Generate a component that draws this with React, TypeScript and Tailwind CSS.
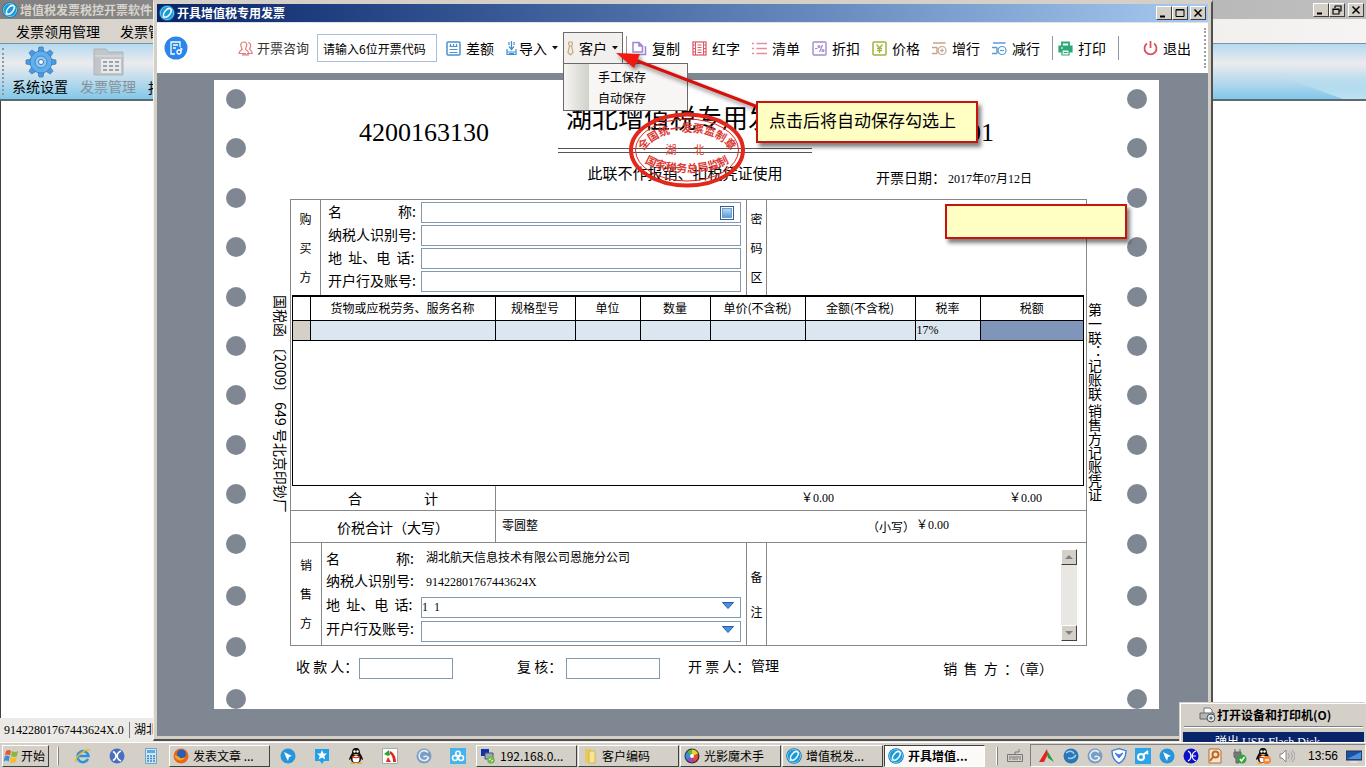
import type { ReactNode } from 'react';
import { clsx } from 'clsx';

const serif = "font-['Liberation_Serif','Noto_Sans_CJK_SC',serif]";

const BrandIcon = ({ size = 16 }: { size?: number }) => (
    <svg width={size} height={size} viewBox="0 0 16 16" className="shrink-0">
        <circle cx="8" cy="8" r="7.8" fill="#1478b8" />
        <circle cx="8" cy="8" r="6.6" fill="#1c9ad8" stroke="#7fd4f5" strokeWidth="0.8" />
        <ellipse cx="8.2" cy="7.6" rx="2.8" ry="5" transform="rotate(38 8 8)" fill="none" stroke="#fff" strokeWidth="1.4" />
        <path d="M3 12c4 2 8-1 9-6" fill="none" stroke="#d8f3ff" strokeWidth="1" />
    </svg>
);

const Icon = ({ color, children, w = 15 }: { color: string; children: ReactNode; w?: number }) => (
    <svg width={w} height="15" viewBox={`0 0 ${w} 15`} fill="none" stroke={color} strokeWidth="1.2" className="shrink-0">
        {children}
    </svg>
);

const icons = {
    consult: (
        <Icon color="#dd7c78">
            <path d="M6 1c-3 0-3.600 2-3 4 .3 1.500 1 2.500 1 3.500C3 9.500 1 10 1 12.500h7M6 1c2 0 3 1.500 2.700 3.500C8.400 6.500 7.500 7 7.600 8.500M10 1.500c2 .3 3 2 2.500 4-.4 1.500-1 2.300-.8 3 1 1 2.500 1.500 2.500 4H9M4 13.800h7M7.600 8.500c1.500 1 2.600 1.500 3 3.500" />
        </Icon>
    ),
    diff: (
        <Icon color="#4a90d0">
            <rect x="1" y="1" width="13" height="13" rx="1" strokeWidth="1.500" />
            <path d="M4.500 3v3M7.500 3v3M10.500 3v3M3.500 5.500h8M3.500 8.500h8M3.500 11.500h8" />
        </Icon>
    ),
    importIcon: (
        <Icon color="#3f8fd0" w={11}>
            <path d="M5.500 0v8M3 5.500l2.500 3 2.500-3M3 1v3M8 1v3M1 8v5.500h9V8M1 11h9M3 12.500h5" />
        </Icon>
    ),
    customer: (
        <Icon color="#c9a878" w={7}>
            <path d="M2 1h3l.5 2-1 2h-2l-1-2zM2.500 5L1 11.500l2.500 2.500L6 11.500 4.500 5" />
        </Icon>
    ),
    copy: (
        <Icon color="#a184cc">
            <path d="M1 1.500h6l3.500 3.500V11H1zM7 1.500V5h3.500" strokeWidth="1.500" />
            <path d="M12.500 6h1v7.500H4" strokeWidth="1.500" />
        </Icon>
    ),
    red: (
        <Icon color="#dc5560">
            <rect x="1" y="1" width="13" height="13" strokeWidth="1.200" />
            <path d="M3.500 1v13M11.500 1v13M5.500 4h4M5.500 6.500h4M5.500 9h4M5.500 11.500h4M1 4h2M1 7.500h2M1 11h2M12 4h2M12 7.500h2M12 11h2" strokeWidth="1" />
        </Icon>
    ),
    list: (
        <Icon color="#e58ba2">
            <path d="M4.500 2.500H15M4.500 7.500H15M4.500 12.500H15M0 2.500h2M0 7.500h2M0 12.500h2" strokeWidth="1.400" />
        </Icon>
    ),
    discount: (
        <Icon color="#a68aca">
            <rect x="1" y="1" width="13" height="13" rx="1" strokeWidth="1.400" />
            <path d="M3 7.500h2.500M10.500 4l-3 7" />
            <circle cx="7" cy="5.500" r="1" />
            <circle cx="11" cy="9.500" r="1" />
        </Icon>
    ),
    price: (
        <Icon color="#9db53a">
            <rect x="1" y="1" width="13" height="13" rx="1" strokeWidth="1.500" />
            <path d="M4.500 3.500l3 3.500 3-3.500M7.500 7v5M5 7.500h5M5 9.700h5" strokeWidth="1.300" />
        </Icon>
    ),
    addRow: (
        <Icon color="#c9a28c">
            <path d="M1 2h12.500M0 6.500h5M0 12.500h5M5 6.500v6" strokeWidth="1.400" />
            <circle cx="10" cy="9.500" r="4" />
            <path d="M8 9.500h4M10 7.500v4" />
        </Icon>
    ),
    delRow: (
        <Icon color="#5b9bd5">
            <path d="M1 2h12.500M0 6.500h5M0 12.500h5M5 6.500v6" strokeWidth="1.400" />
            <circle cx="10" cy="9.500" r="4" />
            <path d="M8 9.500h4" />
        </Icon>
    ),
    print: (
        <Icon color="#2aa876">
            <path d="M4 5V1.500h7V5" strokeWidth="1.800" />
            <path d="M1 5h13v6H1z" fill="#2aa876" />
            <path d="M4 9h7v5H4z" fill="#fff" />
            <path d="M3 7h2" stroke="#fff" />
            <path d="M5.500 11.500h4" />
        </Icon>
    ),
    exit: (
        <Icon color="#d4545e">
            <path d="M4 2.500a6 6 0 1 0 7 0M7.500 0v7" strokeWidth="1.800" />
        </Icon>
    ),
};

const Caret = () => (
    <svg width="6" height="4" viewBox="0 0 6 4" className="shrink-0">
        <path d="M0 0h6L3 3.500z" fill="#111" />
    </svg>
);

const ToolButton = ({ icon, label }: { icon: ReactNode; label: string }) => (
    <button className="flex items-center gap-[5px] text-sm whitespace-nowrap">
        {icon}
        {label}
    </button>
);

const ToolDivider = () => <div className="h-6 w-px shrink-0 bg-[#9a90a8]" />;

const CaptionButton = ({ label, children }: { label: string; children: ReactNode }) => (
    <button
        aria-label={label}
        className="flex h-[14px] w-4 items-center justify-center border border-t-white border-l-white border-r-[#404040] border-b-[#404040] bg-[#d4d0c8]"
    >
        <svg width="10" height="10" viewBox="0 0 10 10" fill="none" stroke="#000" strokeWidth="1.500">
            {children}
        </svg>
    </button>
);

const minimize = <path d="M1 8.500h5" strokeWidth="2" />;
const maximize = <path d="M1 1.500h8v7H1zM1 2h8" strokeWidth="1" />;
const restore = <path d="M3 1h6v5H7M3 1v2M1 4h6v5H1zM1 4.500h6" strokeWidth="1.200" />;
const close = <path d="M1.500 1.500l7 7M8.500 1.500l-7 7" />;

function MainWindow() {
    return (
        <div className="flex h-full flex-col bg-[#d4d0c8]">
            <div className="flex h-[19px] items-center gap-[2px] bg-gradient-to-r from-[#808080] to-[#c0c0c0] pl-[2px] text-[#d8d4cc]">
                <BrandIcon />
                <span className="flex-1 text-xs font-bold">增值税发票税控开票软件</span>
                <div className="flex pr-[2px]">
                    <CaptionButton label="最小化">{minimize}</CaptionButton>
                    <CaptionButton label="还原">{restore}</CaptionButton>
                    <div className="w-[3px]" />
                    <CaptionButton label="关闭">{close}</CaptionButton>
                </div>
            </div>
            <nav className="flex h-6 items-center gap-5 bg-gradient-to-r from-[#d6d2ca] to-[#f5f4f2] pl-4 text-sm">
                <button>发票领用管理</button>
                <button>发票管理</button>
            </nav>
            <div className="relative flex h-[58px] items-stretch border-t border-b-2 border-t-[#7a94a4] border-b-[#606870] bg-gradient-to-b from-[#b3daf0] via-[#ecebed] via-35% to-[#80c8ea]">
                <div className="absolute inset-y-0 right-0 w-[153px] bg-gradient-to-b from-transparent via-transparent to-[#c0e2f2] [clip-path:polygon(35%_50%,100%_50%,100%_100%,85%_100%)]" />
                <div className="my-1 ml-[2px] border-l-2 border-dotted border-[#8a98a4]" />
                <button className="ml-2 flex flex-col items-center text-sm leading-4">
                    <svg width="32" height="32" viewBox="0 0 32 32" className="mt-[2px] ml-[2px]">
                        <g fill="#4c9be0" stroke="#2f78bd" strokeWidth="0.7">
                            {[0, 45, 90, 135, 180, 225, 270, 315].map((a) => (
                                <path key={a} d="M13 6l1-5h4l1 5z" transform={`rotate(${a} 16 16)`} />
                            ))}
                            <circle cx="16" cy="16" r="11" fill="#62aeea" />
                        </g>
                        <circle cx="16" cy="16" r="6" fill="#8fc6f2" stroke="#3d88cb" />
                        <circle cx="16" cy="16" r="2.500" fill="#fff" stroke="#2f78bd" />
                    </svg>
                    系统设置
                </button>
                <button className="ml-3 flex flex-col items-center text-sm leading-4 text-[#84919a]">
                    <svg width="32" height="32" viewBox="0 0 32 32" className="mt-[2px] ml-[2px]">
                        <path d="M1 3h12l2 3h15v23H1z" fill="#c3c6c9" stroke="#adb2b6" />
                        <path d="M2 10h28" stroke="#e0e2e4" />
                        <path d="M8 13h20v14H8z" fill="#e9eaeb" />
                        <path d="M10 16h4M16 16h4M22 16h4M10 20h4M16 20h4M22 20h4M10 24h4M16 24h4M22 24h4" stroke="#9ea4a8" strokeWidth="2" />
                    </svg>
                    发票管理
                </button>
                <span className="ml-3 self-end pb-1 text-sm leading-4">报税处理</span>
            </div>
            <div className="flex-1 border-l border-[#404040] bg-white" />
            <div className={clsx('flex h-6 items-center bg-[#eceae6] pl-1 text-xs', serif)}>
                <span className="w-[126px] border-r border-[#808080]">91422801767443624X.0</span>
                <span className="pl-1">湖北航天信息</span>
            </div>
        </div>
    );
}

const CustomerMenu = () => (
    <div className="relative z-20 flex h-8 w-[60px] shrink-0 items-center border border-[#6a6a6a] border-b-[#f1f0ee] bg-[#f1f0ee] px-[3px]">
        <button className="flex items-center gap-[5px] text-sm whitespace-nowrap">
            {icons.customer}
            客户
            <Caret />
        </button>
        <ul className="absolute top-[30px] -left-px flex w-[125px] flex-col border border-[#6a6a6a] bg-gradient-to-r from-[#f6f5f3] from-0% via-[#d2d2cb] via-20% to-[#f7f6f5] to-20% py-[2px] text-xs">
            <li><button className="h-[22px] pl-[34px]">手工保存</button></li>
            <li><button className="h-5 pl-[34px]">自动保存</button></li>
        </ul>
    </div>
);

function Toolbar() {
    return (
        <div className="flex h-[50px] items-center bg-white">
            <svg width="24" height="24" viewBox="0 0 24 24" className="ml-[7px] shrink-0">
                <circle cx="12" cy="12" r="11.500" fill="#2a86ea" />
                <path d="M11 18H7V6h9v5M9 9h5M9 12h3" fill="none" stroke="#fff" strokeWidth="1.300" />
                <circle cx="15" cy="16" r="2" fill="none" stroke="#fff" strokeWidth="1.300" />
                <path d="M17 16v-3.500l1.500 1" fill="none" stroke="#fff" strokeWidth="1.300" />
            </svg>
            <button className="ml-[50px] flex items-center gap-1 text-[13px] whitespace-nowrap text-[#333]">
                {icons.consult}
                开票咨询
            </button>
            <input
                aria-label="开票代码"
                defaultValue="请输入6位开票代码"
                className="ml-2 h-7 w-[120px] shrink-0 border border-[#a9bedd] px-[5px] text-xs"
            />
            <div className="ml-[9px] flex shrink-0 items-center">
                <ToolButton icon={icons.diff} label="差额" />
                <div className="ml-3 flex items-center gap-[5px]">
                    <button className="flex items-center gap-[2px] text-sm">
                        {icons.importIcon}
                        导入
                    </button>
                    <Caret />
                </div>
            </div>
            <div className="w-[5px] shrink-0" />
            <CustomerMenu />
            <div className="w-[3px] shrink-0" />
            <ToolDivider />
            <div className="ml-[5px] flex shrink-0 gap-3">
                <ToolButton icon={icons.copy} label="复制" />
                <ToolButton icon={icons.red} label="红字" />
                <ToolButton icon={icons.list} label="清单" />
                <ToolButton icon={icons.discount} label="折扣" />
                <ToolButton icon={icons.price} label="价格" />
                <ToolButton icon={icons.addRow} label="增行" />
                <ToolButton icon={icons.delRow} label="减行" />
            </div>
            <div className="ml-3 flex shrink-0 items-center gap-[5px]">
                <ToolDivider />
                <ToolButton icon={icons.print} label="打印" />
            </div>
            <div className="ml-3 flex shrink-0 items-center gap-6">
                <ToolDivider />
                <ToolButton icon={icons.exit} label="退出" />
            </div>
            <div className="mr-[2px] ml-auto h-10 border-l-2 border-dotted border-[#a0a0a0]" />
        </div>
    );
}

const Holes = () => (
    <div className="flex w-11 shrink-0 flex-col items-center gap-8 pt-[9px]">
        {[10, 3].map((n) => (
            <div key={n} className={clsx('flex flex-col justify-between', n === 10 ? 'h-[467px]' : 'h-[124px]')}>
                {Array.from({ length: n }, (_, i) => (
                    <div key={i} className="size-5 rounded-full bg-[#7f8892]" />
                ))}
            </div>
        ))}
    </div>
);

const Stamp = () => (
    <svg width="118" height="76" viewBox="0 0 118 76" className="absolute top-8 left-1/2 z-10 -ml-[61px]">
        <defs>
            <path id="arcTop" d="M15 41A45 27 0 0 1 103 41" />
            <path id="arcBottom" d="M14 48A50 22 0 0 0 104 48" />
        </defs>
        <g fill="none" stroke="#e2281c">
            <ellipse cx="59" cy="38" rx="56" ry="35.500" strokeWidth="4" />
            <ellipse cx="59" cy="38" rx="51.500" ry="31" strokeWidth="1" />
        </g>
        <g fill="#dc3a34" fontSize="11" textAnchor="middle">
            <text fontWeight="bold"><textPath href="#arcTop" startOffset="50%">全国统一发票监制章</textPath></text>
            <text x="43" y="42">湖</text>
            <text x="71" y="42">北</text>
            <text fontWeight="bold"><textPath href="#arcBottom" startOffset="50%">国家税务总局监制</textPath></text>
        </g>
    </svg>
);

const InvoiceHeader = () => (
    <div className="relative flex h-[119px] justify-between">
        <div className={clsx('w-[268px] pt-[33px] pl-[69px] text-[26px]', serif)}>4200163130</div>
        <div className="flex w-[254px] flex-col items-center">
            <h1 className="mt-[18px] self-start pl-2 text-[26px] leading-[38px] whitespace-nowrap">湖北增值税专用发票</h1>
            <div className="mt-3 h-[5px] w-full border-y border-[#555]" />
            <p className="mt-[10px] text-[15px] leading-5 whitespace-nowrap">此联不作报销、扣税凭证使用</p>
        </div>
        <Stamp />
        <div className="flex w-[275px] flex-col">
            <div className={clsx('pt-[33px] pr-[93px] text-right text-[26px]', serif)}>01</div>
            <p className="mt-[15px] flex items-center pl-[64px] text-sm leading-5 whitespace-nowrap">
                <span className="w-[72px]">开票日期：</span>
                <span className={clsx('pt-1 text-xs', serif)}>2017年07月12日</span>
            </p>
        </div>
    </div>
);

const SideTitle = ({ chars }: { chars: string }) => (
    <div className="flex flex-col items-center justify-around py-1 text-xs">
        {chars.split('').map((c) => <span key={c}>{c}</span>)}
    </div>
);

const fieldLabels = ['名　　　　称:', '纳税人识别号:', '地  址、电  话:', '开户行及账号:'];

const BuyerSection = () => (
    <div className="flex h-24 border-x border-t border-[#888]">
        <div className="grid w-[30px] border-r border-[#888]"><SideTitle chars="购买方" /></div>
        <div className="flex w-[426px] flex-col gap-[2px] border-r border-[#888] pt-[2px] pr-[5px] pl-[7px]">
            {fieldLabels.map((label, i) => (
                <div key={label} className="flex h-[21px] items-center">
                    <label htmlFor={`buyer${i}`} className="w-[93px] pb-1 text-sm whitespace-pre">{label}</label>
                    <div className="flex h-full flex-1 items-center border border-[#8299b0] bg-white pr-[6px]">
                        <input id={`buyer${i}`} className="h-full min-w-0 flex-1 px-px text-xs outline-none" />
                        {i === 0 && (
                            <button aria-label="选择购买方" className="h-[14px] w-[14px] border border-[#2d6098] p-px">
                                <div className="h-full border border-[#6aa0d0] bg-gradient-to-b from-[#b8d8f2] to-[#5f9fd6]" />
                            </button>
                        )}
                    </div>
                </div>
            ))}
        </div>
        <div className="grid w-5 border-r border-[#888]"><SideTitle chars="密码区" /></div>
    </div>
);

const columns = [
    { name: '', width: 'w-[17px]' },
    { name: '货物或应税劳务、服务名称', width: 'w-[185px]' },
    { name: '规格型号', width: 'w-20' },
    { name: '单位', width: 'w-[65px]' },
    { name: '数量', width: 'w-[70px]' },
    { name: '单价(不含税)', width: 'w-[95px]' },
    { name: '金额(不含税)', width: 'w-[110px]' },
    { name: '税率', width: 'w-[65px]' },
    { name: '税额', width: '' },
];

const ItemsTable = () => (
    <div className="h-[191px] border-x border-[#888] pr-[2px] pl-px">
        <div className="h-full border border-t-2 border-black">
            <table className="w-full table-fixed border-collapse text-xs">
                <thead>
                    <tr className="h-[23px]">
                        {columns.map((col) => (
                            <th key={col.name} className={clsx('border-r border-b border-black p-0 font-normal whitespace-nowrap last:border-r-0', col.width)}>
                                {col.name}
                            </th>
                        ))}
                    </tr>
                </thead>
                <tbody>
                    <tr className="h-5">
                        {columns.map((col, i) => (
                            <td
                                key={col.name}
                                className={clsx(
                                    'border-r border-b border-black p-0 pl-px leading-[18px] last:border-r-0',
                                    i === 0 ? 'bg-[#d4d0c8]' : i === 8 ? 'bg-[#7f96ba]' : 'bg-[#dce6f0]',
                                    serif,
                                )}
                            >
                                {col.name === '税率' && '17%'}
                            </td>
                        ))}
                    </tr>
                </tbody>
            </table>
        </div>
    </div>
);

const Totals = () => (
    <div className="border-x border-[#888] text-sm">
        <div className="flex h-[25px] border-b border-[#888]">
            <div className="flex w-[205px] items-center justify-center gap-[62px] border-r border-[#888]">
                <span>合</span>
                <span>计</span>
            </div>
            <div className={clsx('flex flex-1 items-center justify-between pr-11 pl-[305px] text-xs', serif)}>
                <span>￥0.00</span>
                <span>￥0.00</span>
            </div>
        </div>
        <div className="flex h-8 items-center border-b border-[#888]">
            <div className="flex h-full w-[205px] items-center justify-center border-r border-[#888]">价税合计（大写）</div>
            <div className="w-[371px] pb-1 pl-[6px] text-xs">零圆整</div>
            <span className="text-xs">（小写）</span>
            <span className={clsx('pb-1 pl-px text-xs', serif)}>￥0.00</span>
        </div>
    </div>
);

const ScrollButton = ({ label, d }: { label: string; d: string }) => (
    <button aria-label={label} className="flex size-4 items-center justify-center border border-t-white border-l-white border-r-[#404040] border-b-[#404040] bg-[#d4d0c8]">
        <svg width="8" height="4" viewBox="0 0 8 4"><path d={d} fill="#808080" /></svg>
    </button>
);

const ComboField = ({ id, value }: { id: string; value: string }) => (
    <div className="relative h-[21px] flex-1">
        <select id={id} defaultValue={value} className={clsx('h-full w-full appearance-none border border-[#8299b0] bg-white text-xs', serif)}>
            <option value={value}>{value}</option>
        </select>
        <svg width="12" height="7" viewBox="0 0 12 7" className="pointer-events-none absolute top-[7px] right-[7px]">
            <path d="M0.500 0.500h11L6 6.500z" fill="#4b92e4" stroke="#2a5aa8" />
        </svg>
    </div>
);

const SellerSection = () => (
    <div className="flex h-[103px] border-x border-b border-[#888]">
        <div className="grid w-[31px] border-r border-[#888] py-1"><SideTitle chars="销售方" /></div>
        <div className="flex w-[425px] flex-col gap-[3px] border-r border-[#888] pt-1 pr-[5px] pl-1 text-sm">
            <div className="flex h-[21px] items-center">
                <span className="w-[100px] whitespace-pre">{fieldLabels[0]}</span>
                <span className="pb-[2px] text-xs">湖北航天信息技术有限公司恩施分公司</span>
            </div>
            <div className="flex h-[21px] items-center">
                <span className="w-[100px] pb-1">{fieldLabels[1]}</span>
                <span className={clsx('text-xs', serif)}>91422801767443624X</span>
            </div>
            <div className="flex h-[21px] items-center">
                <label htmlFor="sellerAddress" className="w-[95px] pb-1 whitespace-pre">{fieldLabels[2]}</label>
                <ComboField id="sellerAddress" value={'1\u00a0\u00a01'} />
            </div>
            <div className="flex h-[21px] items-center">
                <label htmlFor="sellerBank" className="w-[95px] pb-1">{fieldLabels[3]}</label>
                <ComboField id="sellerBank" value="" />
            </div>
        </div>
        <div className="grid w-5 border-r border-[#888] py-3"><SideTitle chars="备注" /></div>
        <div className="flex flex-1 pt-[6px] pr-[9px] pb-1">
            <textarea aria-label="备注" className="flex-1 resize-none outline-none" />
            <div className="flex w-4 flex-col justify-between bg-[#e9e7e3]">
                <ScrollButton label="上" d="M0 4h8L4 0z" />
                <ScrollButton label="下" d="M0 0h8L4 4z" />
            </div>
        </div>
    </div>
);

const InvoiceFooter = () => (
    <div className="flex h-11 items-center text-sm whitespace-pre pl-[6px]">
        <label htmlFor="payee" className="w-[63px] pb-1">收 款 人：</label>
        <input id="payee" className="h-[21px] w-[94px] border border-[#8299b0]" />
        <label htmlFor="checker" className="ml-16 w-[49px] pb-1">复 核：</label>
        <input id="checker" className="h-[21px] w-[94px] border border-[#8299b0]" />
        <span className="ml-7 w-[63px] pb-1">开 票 人：</span>
        <span className="pb-[6px]">管理</span>
        <span className="mr-[34px] ml-auto">销  售  方  ：（章）</span>
    </div>
);

function InvoiceWindow() {
    return (
        <section className="absolute top-0 right-[153px] bottom-px left-[153px] flex flex-col border-t-[3px] border-r-2 border-b-2 border-l border-t-[#d4d0c8] border-r-[#505050] border-b-[#505050] border-l-[#f4f2ee] bg-[#d4d0c8] px-[3px] pt-px pb-[3px]">
            <div className="flex h-[19px] shrink-0 items-center gap-[2px] border-b border-[#e4e2de] bg-gradient-to-r from-[#0a246a] to-[#a6caf0] pr-[2px] pl-[2px] text-white">
                <BrandIcon />
                <span className="flex-1 text-xs font-bold">开具增值税专用发票</span>
                <CaptionButton label="最小化">{minimize}</CaptionButton>
                <div className="-ml-[2px]">
                    <CaptionButton label="最大化">{maximize}</CaptionButton>
                </div>
                <CaptionButton label="关闭">{close}</CaptionButton>
            </div>
            <Toolbar />
            <div className="min-h-0 flex-1 bg-[#7f8892] pt-[7px] pr-[49px] pl-[57px]">
                <div className="flex h-[629px] overflow-hidden bg-white">
                    <Holes />
                    <div className="w-[31px] shrink-0 pt-[215px] pl-[13px] text-sm leading-4 whitespace-nowrap [writing-mode:vertical-rl] [text-orientation:sideways]">
                        国税函 〔2009〕 649 号北京印钞厂
                    </div>
                    <div className="ml-px min-w-0 flex-1">
                        <InvoiceHeader />
                        <BuyerSection />
                        <ItemsTable />
                        <Totals />
                        <SellerSection />
                        <InvoiceFooter />
                    </div>
                    <div className="w-[28px] shrink-0 pt-[223px] pr-[12px] text-sm leading-4 whitespace-nowrap [writing-mode:vertical-rl]">
                        第一联：记账联 销售方记账凭证
                    </div>
                    <Holes />
                </div>
            </div>
        </section>
    );
}

const Annotations = () => (
    <>
        <svg width="160" height="80" viewBox="0 0 160 80" className="pointer-events-none absolute top-[40px] left-[605px] z-30 drop-shadow-[2px_3px_2px_rgba(0,0,0,0.45)]">
            <path d="M153 67L30 20" stroke="#d8100c" strokeWidth="3" />
            <path d="M11 13l24 1-6 14z" fill="#f01810" />
        </svg>
        <div className="absolute top-[101px] left-[756px] z-30 border-2 border-[#c8140e] bg-[#ffffc4] px-[11px] pt-1 pb-2 text-[17px] leading-[26px] whitespace-nowrap shadow-[3px_4px_4px_rgba(0,0,0,0.5)]">
            <span className="mr-[9px]">点击后将自动保存勾选上</span>
        </div>
        <div className="absolute top-[204px] left-[945px] z-30 h-[35px] w-[182px] border-2 border-[#c8140e] bg-[#ffffc4] shadow-[3px_4px_4px_rgba(0,0,0,0.5)]" />
    </>
);

const DevicePopup = () => (
    <div className="absolute right-0 bottom-0 z-30 flex h-[39px] w-[186px] flex-col overflow-hidden border-t border-l border-white bg-[#d4d0c8] px-[2px] text-xs shadow-[-1px_-1px_0_#d4d0c8]">
        <button className="flex h-[22px] shrink-0 items-center pb-px pl-4 font-bold">
            <svg width="18" height="16" viewBox="0 0 18 16">
                <path d="M5 6V1h6l2 2v3" fill="#fff" stroke="#777" />
                <path d="M1 6h14v6H1z" fill="#b6b6b6" stroke="#666" />
                <circle cx="12" cy="11" r="4" fill="#dde4ea" stroke="#555" />
                <circle cx="12" cy="11" r="1.500" fill="#4b6e8e" />
            </svg>
            打开设备和打印机(O)
        </button>
        <div className="mx-px mb-1 h-[2px] shrink-0 border-t border-[#808080] bg-white" />
        <button className={clsx('h-5 shrink-0 bg-[#0a246a] pl-8 text-left text-white', serif)}>弹出 USB Flash Disk</button>
    </div>
);

const Disc = ({ fill, children }: { fill: string; children?: ReactNode }) => (
    <svg width="16" height="16" viewBox="0 0 16 16" className="shrink-0">
        <circle cx="8" cy="8" r="7.500" fill={fill} />
        {children}
    </svg>
);

const Square = ({ children }: { children: ReactNode }) => (
    <svg width="16" height="16" viewBox="0 0 16 16" className="shrink-0">{children}</svg>
);

const wing = <path d="M4 4l8 4-3 1-1 4-2-4z" fill="#fff" />;
const swirl = <path d="M12 4.500a5 5 0 1 0 .5 5.500C11 8 9 8 7.500 9" fill="none" stroke="#e4eef8" strokeWidth="1.600" />;

const Penguin = ({ busy }: { busy?: boolean }) => (
    <Square>
        <path d="M8 0c-3 0-4 2-4 5-1 2-3 4-3 7 1 0 1-1 2-1 0 2 1 4 5 4s5-2 5-4c1 0 1 1 2 1 0-3-2-5-3-7 0-3-1-5-4-5z" fill="#111" />
        <ellipse cx="8" cy="11" rx="3.500" ry="3.500" fill="#fff" />
        <circle cx="6.500" cy="3.500" r="1.200" fill="#fff" />
        <circle cx="9.500" cy="3.500" r="1.200" fill="#fff" />
        <path d="M5 6h6l-3 1.500zM2 14.500h5v1.500H3zM9 14.500h5l-1 1.500H9z" fill="#f5a31c" />
        <path d="M4 8c3 1.500 5 1.500 8 0v1.500c-3 1-5 1-8 0z" fill="#e02020" />
        {busy && <circle cx="12" cy="12" r="4" fill="#f5893a" />}
        {busy && <path d="M10 12h4" stroke="#fff" strokeWidth="1.500" />}
    </Square>
);

const IE = () => (
    <Square>
        <path d="M13 11a5.500 5.500 0 1 1 .5-3H4" fill="none" stroke="#2b93dc" strokeWidth="2.500" />
        <path d="M1 14C-1 10 10 0 15 2" fill="none" stroke="#edb62c" strokeWidth="1.500" />
    </Square>
);

const Calculator = () => (
    <Square>
        <path d="M2.500.5h11v15h-11z" fill="#cfe6f6" stroke="#6fa5cc" />
        <path d="M4 2h8v3H4z" fill="#5ba9dd" />
        <path d="M4 8h8M4 10.500h8M4 13h8" stroke="#3b86bf" strokeDasharray="2 1" strokeWidth="1.500" />
    </Square>
);

const TaskButton = ({ icon, label, active }: { icon: ReactNode; label: string; active?: boolean }) => (
    <button
        className={clsx(
            'flex h-[22px] w-[101px] shrink-0 items-center gap-1 overflow-hidden border px-[3px] text-xs whitespace-nowrap',
            active
                ? 'border-t-[#404040] border-l-[#404040] border-r-white border-b-white bg-[#fbfaf8] font-bold'
                : 'border-t-white border-l-white border-r-[#404040] border-b-[#404040] bg-[#d4d0c8]',
        )}
    >
        {icon}
        {label}
    </button>
);

function Taskbar() {
    return (
        <footer className="flex h-[26px] shrink-0 items-center border-t border-white bg-[#d4d0c8] pl-[2px]">
            <button className="flex h-[22px] w-[47px] items-center gap-px border border-t-white border-l-white border-r-[#404040] border-b-[#404040] text-xs whitespace-nowrap">
                <svg width="17" height="16" viewBox="0 0 17 16" className="shrink-0">
                    <path d="M3 3c2-1.500 3-1.500 5 0L7 7.500c-2-1.300-3-1.300-5 0z" fill="#e8542c" />
                    <path d="M9 3c2 1.300 4 1.300 6 0l-1 5c-2 1.200-4 1.200-6 0z" fill="#86b93c" />
                    <path d="M1.700 8.500c2-1.300 3-1.300 5 0l-1 5c-2-1.300-3-1.300-5 0z" fill="#3c8cd8" />
                    <path d="M7.700 9c2 1.200 4 1.200 6 0l-1 5c-2 1.200-4 1.200-6 0z" fill="#f4bd2c" />
                </svg>
                开始
            </button>
            <div className="ml-2 h-[18px] w-[2px] border-r border-[#808080] bg-white" />
            <div className="ml-4 flex gap-[18px]">
                <IE />
                <Disc fill="#4a6fc0"><path d="M4 3.500c4 2 4 7 0 9M12 3c-5 2-5 8 0 10" fill="none" stroke="#fff" strokeWidth="1.500" /></Disc>
                <Calculator />
            </div>
            <div className="ml-[10px]">
                <TaskButton
                    icon={<Disc fill="#e8661c"><circle cx="8.500" cy="6" r="4.500" fill="#2a5fb4" /><path d="M1 6c2 3 3 1 5 3s4 1 6 0c-2 5-9 5-11-3z" fill="#f7a81e" /></Disc>}
                    label="发表文章 ..."
                />
            </div>
            <div className="ml-[10px] flex gap-[18px]">
                <Disc fill="#2596dc">{wing}</Disc>
                <Square>
                    <path d="M1 1h14v12h-5l-2 3-2-3H1z" fill="#1fa0ea" />
                    <path d="M8 2l1.500 3.500H13L10.300 8l1 3.500L8 9.500l-3.300 2 1-3.500L3 5.500h3.500z" fill="#fff" />
                </Square>
                <Penguin />
                <Square>
                    <path d="M.5.5h15v15H.5z" fill="#fff" stroke="#aaa" />
                    <path d="M2 6l5-4 1 5-2 1z" fill="#2aa336" />
                    <path d="M8 3c4 2 6 6 6 11h-3C11 10 10 7 8 6z" fill="#e02c20" />
                    <path d="M6 9l3 5H4z" fill="#e02c20" />
                </Square>
                <Disc fill="#7c9cc4">{swirl}</Disc>
                <Square>
                    <path d="M0 0h16v16H0z" fill="#45b4ec" />
                    <g fill="none" stroke="#fff" strokeWidth="1.500"><circle cx="5" cy="10" r="2.500" /><circle cx="11" cy="10" r="2.500" /><circle cx="8" cy="5.500" r="2.200" /></g>
                </Square>
            </div>
            <div className="ml-[10px] flex gap-[1px]">
                <TaskButton icon={<Square><path d="M1 1h8v7H1z" fill="#1030b0" /><path d="M5 5h8v6H5z" fill="#9ab" stroke="#456" /><circle cx="11" cy="12" r="3.800" fill="#74b84a" /><path d="M9 12l2-1.500M11 13.500l2-1.500" stroke="#fff" /></Square>} label="192.168.0..." />
                <TaskButton icon={<Square><path d="M3 1h6v14H3z" fill="#e7c95c" /><path d="M7 3h6v12H7z" fill="#f7e596" stroke="#d6b848" /></Square>} label="客户编码" />
                <TaskButton
                    icon={<Disc fill="#333"><path d="M8 8L8 1.500A6.500 6.500 0 0 1 14 6z" fill="#ecd22e" /><path d="M8 8l6-2a6.500 6.500 0 0 1-4 8z" fill="#e8493a" /><path d="M8 8l2 6a6.500 6.500 0 0 1-7-2z" fill="#a048c0" /><path d="M8 8l-5 4a6.500 6.500 0 0 1 0-8z" fill="#3a8de0" /><path d="M8 8L3 4a6.500 6.500 0 0 1 5-2.500z" fill="#57bb41" /><circle cx="8" cy="8" r="2" fill="#fff" /></Disc>}
                    label="光影魔术手"
                />
                <TaskButton icon={<BrandIcon />} label="增值税发..." />
                <TaskButton icon={<BrandIcon />} label="开具增值..." active />
            </div>
            <div className="ml-[11px] h-[18px] w-[2px] border-r border-[#808080] bg-white" />
            <svg width="16" height="16" viewBox="0 0 16 16" className="ml-[9px] shrink-0" fill="none" stroke="#777">
                <path d="M.5 6.500h15v7H.5zM8 6V4h4V1M2 9h12M2 11h2M5 11h6M12 11h2" />
            </svg>
            <div className="ml-auto flex h-[23px] shrink-0 items-center gap-2 border border-t-[#808080] border-l-[#808080] border-r-white border-b-white pr-[3px] pl-2">
                <Square><path d="M0 14L8 1l1 5-4 8z" fill="#e3261c" /><path d="M9 4l6 10-6-4-1-4z" fill="#279a3a" /></Square>
                <Disc fill="#2b76b4"><path d="M3 5c3-3 7-2 8 1M5 10c3 1 6 0 8-3" fill="none" stroke="#9bd0f2" strokeWidth="1.500" /></Disc>
                <Disc fill="#7c9cc4">{swirl}</Disc>
                <Square>
                    <path d="M8 .7l7 2c0 6-2 10-7 12.600C3 12.700 1 8.700 1 2.700z" fill="#fff" stroke="#3c7ddc" strokeWidth="1.400" />
                    <path d="M4 5l4 5 4-5-4 2z" fill="#3c7ddc" stroke="#3c7ddc" />
                </Square>
                <Square><path d="M0 0h16v16H0z" fill="#2ba4e8" /><circle cx="6" cy="9" r="3" fill="none" stroke="#fff" strokeWidth="2" /><path d="M8 7l5-4M11 4l2 2" stroke="#fff" strokeWidth="2" /></Square>
                <Disc fill="#2596dc">{wing}</Disc>
                <Disc fill="#0a12c8"><path d="M5 3c4 2 4 8 0 10M13 3c-5 2-5 8 0 10M9 8h4" fill="none" stroke="#fff" strokeWidth="1.200" /></Disc>
                <Square><path d="M2 1h10l2 2v12H2z" fill="#f2e6d8" stroke="#b3702c" /><circle cx="8.500" cy="6.500" r="3" fill="none" stroke="#c8651c" strokeWidth="2" /><path d="M6 9l-3 4" stroke="#c8651c" strokeWidth="2" /></Square>
                <Square><path d="M3 4h7v5l-2 2v4H5v-4L3 9zM4 1v3M9 1v3" fill="#777" stroke="#666" /><circle cx="11" cy="11" r="4.500" fill="#31a53c" /><path d="M9 11l1.500 2L13.500 9" fill="none" stroke="#fff" strokeWidth="1.500" /></Square>
                <Penguin busy />
                <Square><path d="M1 6h2l4-4v12l-4-4H1z" fill="#fff" stroke="#888" /><path d="M9 5c1.500 2 1.500 4 0 6M11 3.500c3 3 3 6 0 9M13 2c4 4 4 8 0 12" fill="none" stroke="#999" /></Square>
                <time className="ml-[5px] font-['Liberation_Sans'] text-xs">13:56</time>
                <svg width="16" height="16" viewBox="0 0 16 16"><path d="M0 3h16v9H0z" fill="#1d4fa0" stroke="#234" /><path d="M1 11L15 4v7z" fill="#4a8fe0" /><path d="M4 14h8" stroke="#eee" /></svg>
            </div>
        </footer>
    );
}

export default function App() {
    return (
        <div className="flex h-screen min-h-[768px] w-full flex-col overflow-hidden bg-[#d4d0c8] font-['Noto_Sans_CJK_SC',sans-serif] text-black">
            <main className="relative min-h-0 flex-1">
                <MainWindow />
                <InvoiceWindow />
                <Annotations />
                <DevicePopup />
            </main>
            <Taskbar />
        </div>
    );
}
